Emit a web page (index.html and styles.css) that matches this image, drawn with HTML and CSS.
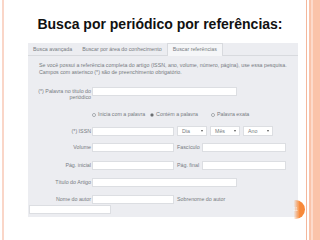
FILE: index.html
```html
<!DOCTYPE html>
<html lang="pt-BR">
<head>
    <meta charset="UTF-8">
    <meta name="viewport" content="width=device-width, initial-scale=1.0">
    <title>Busca por periódico por referências</title>
    <link rel="stylesheet" href="styles.css">
</head>
<body>
    <div class="slide">
        <div class="edge-left"></div>

        <main class="content">
            <h1 class="title">Busca por periódico por referências:</h1>

            <section class="panel">
                <nav class="tabs">
                    <span class="tab">Busca avançada</span>
                    <span class="tab">Buscar por área do conhecimento</span>
                    <span class="tab active">Buscar referências</span>
                </nav>

                <div class="panel-body">
                    <p class="intro">
                        Se você possui a referência completa do artigo (ISSN, ano, volume, número, página), use essa pesquisa.<br>
                        Campos com asterisco (*) são de preenchimento obrigatório.
                    </p>

                    <div class="row row-title">
                        <label class="label">(*) Palavra no título do periódico</label>
                        <span class="input wide"></span>
                    </div>

                    <div class="row row-radio">
                        <span class="option"><span class="radio"></span>Inicia com a palavra</span>
                        <span class="option"><span class="radio checked"></span>Contém a palavra</span>
                        <span class="option"><span class="radio"></span>Palavra exata</span>
                    </div>

                    <div class="row row-issn">
                        <label class="label">(*) ISSN</label>
                        <span class="input short"></span>
                        <span class="select">Dia<i class="caret"></i></span>
                        <span class="select">Mês<i class="caret"></i></span>
                        <span class="select">Ano<i class="caret"></i></span>
                    </div>

                    <div class="row row-volume">
                        <label class="label">Volume</label>
                        <span class="input short"></span>
                        <label class="label-side fixed">Fascículo</label>
                        <span class="input side"></span>
                    </div>

                    <div class="row row-page">
                        <label class="label">Pág. inicial</label>
                        <span class="input short"></span>
                        <label class="label-side fixed">Pág. final</label>
                        <span class="input side"></span>
                    </div>

                    <div class="row row-article">
                        <label class="label">Título do Artigo</label>
                        <span class="input wide"></span>
                    </div>

                    <div class="row row-author">
                        <label class="label">Nome do autor</label>
                        <span class="input short"></span>
                        <label class="label-side">Sobrenome do autor</label>
                    </div>

                    <div class="row row-wrap">
                        <span class="input short"></span>
                    </div>
                </div>
            </section>
        </main>

        <div class="edge-right">
            <span class="band"></span>
        </div>
    </div>

    <span class="slide-num">11</span>
</body>
</html>
```

FILE: styles.css
```css
:root {
    --accent: #f7893a;
    --peach: #fac3a9;
    --peach-light: #fcdacb;
    --peach-line: #f4b69b;
    --panel-bg: #ecedf1;
    --panel-line: #d8dade;
    --field-border: #dcdee2;
    --text: #111111;
    --text-muted: #777b81;
}

/* Reset */
*, *::before, *::after {
    box-sizing: border-box;
    margin: 0;
    padding: 0;
}

body {
    width: 320px;
    height: 240px;
    overflow: hidden;
    position: relative;
    background: #ffffff;
    font-family: "Liberation Sans", Arial, sans-serif;
    color: var(--text);
}

/* Moldura do slide */
.slide {
    display: flex;
    height: 240px;
}

.edge-left {
    width: 2px;
    margin-left: 2px;
    background: #fad6c8;
}

.content {
    width: 302px;
}

.edge-right {
    display: flex;
    flex: 1;
    border-left: 1px solid var(--peach-line);
    padding-left: 2px;
}

.band {
    flex: 1;
    background: linear-gradient(to right,
        var(--peach) 0 2px,
        var(--peach-light) 2px 4px,
        var(--peach) 4px);
}

.title {
    margin: 16px 0 11px 10px;
    font-size: 14px;
    line-height: 16px;
    font-weight: 700;
    text-align: center;
}

/* Painel capturado */
.panel {
    width: 270px;
    height: 174px;
    margin-left: 24px;
    background: var(--panel-bg);
    font-size: 5.3px;
    line-height: 7px;
    color: var(--text-muted);
}

.tabs {
    display: flex;
    height: 13px;
    border-bottom: 1px solid var(--panel-line);
}

.tab {
    padding: 0 5px;
    line-height: 12px;
}

.tab.active {
    background: #f5f6f8;
    border: 1px solid var(--panel-line);
    border-bottom: none;
    margin-bottom: -1px;
    line-height: 11px;
}

.panel-body {
    padding: 6px 0 0 8px;
}

.intro {
    padding-left: 3px;
}

.row {
    display: flex;
    align-items: center;
    height: 10px;
}

.label {
    width: 56px;
    padding-right: 1px;
    text-align: right;
    line-height: 6px;
}

.label-side {
    margin-left: 3px;
    white-space: nowrap;
}

.label-side.fixed {
    width: 25px;
}

.input {
    height: 9px;
    background: #ffffff;
    border: 1px solid var(--field-border);
}

.input.wide { width: 145px; }
.input.short { width: 82px; }
.input.side { width: 84px; }

.select {
    display: flex;
    align-items: center;
    justify-content: space-between;
    width: 30px;
    height: 10px;
    margin-left: 3px;
    padding: 0 3px 0 4px;
    background: #ffffff;
    border: 1px solid var(--field-border);
}

.caret {
    border: 1.5px solid transparent;
    border-top: 2px solid #555555;
    border-bottom: none;
}

.row-title {
    align-items: flex-start;
    height: auto;
    margin-top: 11px;
}

.row-title .label {
    padding-top: 1px;
}

.row-radio {
    height: 7px;
    margin-top: 11px;
    padding-left: 56px;
}

.option {
    display: flex;
    align-items: center;
    gap: 2px;
    margin-right: 5px;
}

.option:nth-child(2) {
    margin-right: 13px;
}

.radio {
    width: 4px;
    height: 4px;
    border-radius: 50%;
    border: 0.6px solid #a4a8ae;
    background: #ffffff;
}

.radio.checked {
    background: radial-gradient(circle, #555555 0 1px, #ffffff 1.2px);
}

.row-issn { margin-top: 8px; }
.row-volume { margin-top: 6px; }
.row-page { margin-top: 8px; }
.row-article { margin-top: 7px; }
.row-author { margin-top: 7px; }

.row-wrap {
    margin-left: -7px;
}

/* Número do slide */
.slide-num {
    position: absolute;
    left: 286px;
    top: 200px;
    width: 19px;
    height: 19px;
    border-radius: 50%;
    background: linear-gradient(to right, rgba(247, 137, 58, 0) 40%, rgba(247, 137, 58, 0.5) 55%, var(--accent) 72%);
    color: rgba(255, 255, 255, 0.7);
    font-size: 5px;
    line-height: 19px;
    text-align: center;
}
```
